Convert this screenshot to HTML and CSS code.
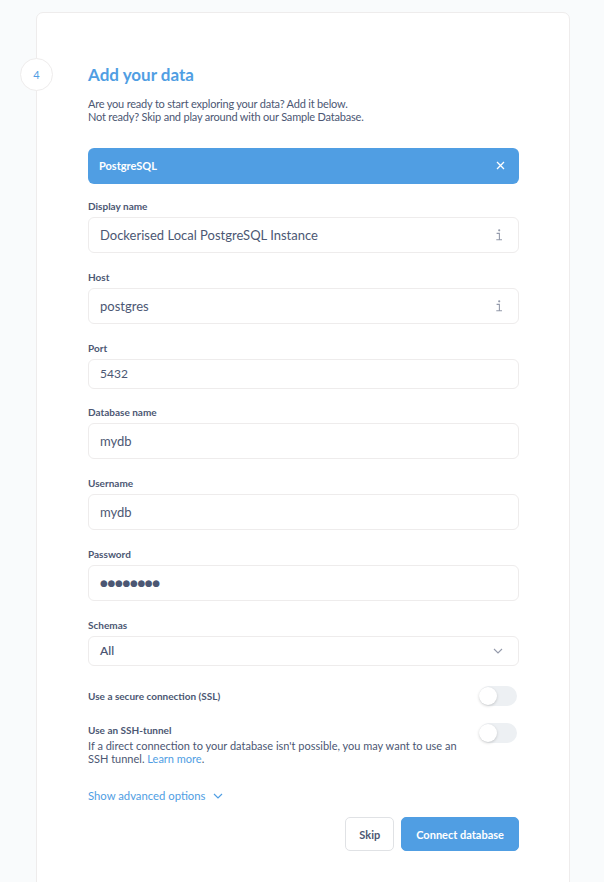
FILE: index.html
```html
<!DOCTYPE html>
<html>
<head>
<meta charset="utf-8">
<link rel="stylesheet" href="styles.css">
</head>
<body>
<div class="card">
  <div class="step">4</div>
  <h2 class="title">Add your data</h2>
  <p class="desc">Are you ready to start exploring your data? Add it below.<br>Not ready? Skip and play around with our Sample Database.</p>

  <div class="engine">
    <span>PostgreSQL</span>
    <svg class="close" width="9" height="9" viewBox="0 0 9 9"><path d="M1 1L8 8M8 1L1 8" stroke="#fff" stroke-width="1.3" fill="none"/></svg>
  </div>

  <div class="field">
    <div class="label">Display name</div>
    <div class="input big"><span>Dockerised Local PostgreSQL Instance</span>
      <svg class="info" width="8" height="12" viewBox="0 0 8 12"><circle cx="4.2" cy="1.3" r="1.1" fill="#949aab"/><path d="M1.6 4.4H4.4V10.6M1.3 10.8H7" stroke="#949aab" stroke-width="1.1" fill="none"/></svg>
    </div>
  </div>

  <div class="field">
    <div class="label">Host</div>
    <div class="input big"><span>postgres</span>
      <svg class="info" width="8" height="12" viewBox="0 0 8 12"><circle cx="4.2" cy="1.3" r="1.1" fill="#949aab"/><path d="M1.6 4.4H4.4V10.6M1.3 10.8H7" stroke="#949aab" stroke-width="1.1" fill="none"/></svg>
    </div>
  </div>

  <div class="field field-small">
    <div class="label">Port</div>
    <div class="input small"><span>5432</span></div>
  </div>

  <div class="field">
    <div class="label">Database name</div>
    <div class="input big"><span>mydb</span></div>
  </div>

  <div class="field">
    <div class="label">Username</div>
    <div class="input big"><span>mydb</span></div>
  </div>

  <div class="field">
    <div class="label">Password</div>
    <div class="input big"><span class="dots">●●●●●●●●</span></div>
  </div>

  <div class="field">
    <div class="label">Schemas</div>
    <div class="input small select"><span>All</span>
      <svg class="chev" width="10" height="6" viewBox="0 0 10 6"><path d="M1 1L5 5L9 1" stroke="#949aab" stroke-width="1.1" fill="none"/></svg>
    </div>
  </div>

  <div class="toggle-row ssl">
    <div class="label">Use a secure connection (SSL)</div>
    <div class="toggle"><div class="knob"></div></div>
  </div>

  <div class="toggle-row ssh">
    <div class="toggle-text">
      <div class="label">Use an SSH-tunnel</div>
      <p class="help">If a direct connection to your database isn't possible, you may want to use an SSH tunnel. <a class="link">Learn more</a>.</p>
    </div>
    <div class="toggle"><div class="knob"></div></div>
  </div>

  <div class="advanced">
    <span>Show advanced options</span>
    <svg width="10" height="6" viewBox="0 0 10 6"><path d="M1 1L5 5L9 1" stroke="#509ee3" stroke-width="1.2" fill="none"/></svg>
  </div>

  <div class="actions">
    <button class="btn skip">Skip</button>
    <button class="btn primary">Connect database</button>
  </div>
</div>
</body>
</html>
```

FILE: styles.css
```css
* { box-sizing: border-box; }
html, body { margin: 0; padding: 0; }
body {
  background: #f9fbfc;
  font-family: Lato, "Noto Sans", sans-serif;
  color: #4c5773;
  padding-top: 12px;
}
.card {
  position: relative;
  margin-left: 36px;
  width: 534px;
  background: #fff;
  border: 1px solid #eeecec;
  border-radius: 7px;
  padding: 51px 50px 60px 51px;
}
.step {
  position: absolute;
  left: -17px;
  top: 45px;
  width: 33px;
  height: 33px;
  border-radius: 50%;
  border: 1px solid #eeecec;
  background: #fff;
  color: #509ee3;
  font-size: 11px;
  display: flex;
  align-items: center;
  justify-content: center;
}
.title {
  margin: 0;
  font-size: 17px;
  line-height: 22px;
  font-weight: 700;
  color: #509ee3;
}
.desc {
  margin: 11px 0 0;
  font-size: 11px;
  letter-spacing: -0.2px;
  line-height: 13.4px;
}
.engine {
  margin-top: 24px;
  height: 36px;
  background: #509ee3;
  border-radius: 6px;
  display: flex;
  align-items: center;
  justify-content: space-between;
  padding: 0 14px 0 11px;
  color: #fff;
  font-weight: 700;
  font-size: 11px;
  margin-bottom: 14px;
}
.field { margin-bottom: 16px; }
.field-small { margin-bottom: 15px; }
.label {
  font-size: 10px;
  font-weight: 700;
  line-height: 16px;
  margin-bottom: 3px;
  color: #4c5773;
}
.input {
  border: 1px solid #eeecec;
  border-radius: 6px;
  display: flex;
  align-items: center;
  justify-content: space-between;
  padding: 0 13px 0 11px;
  color: #4c5773;
}
.input.big { height: 36px; font-size: 13px; }
.input.small { height: 30px; font-size: 12px; }
.select { font-weight: 600; font-size: 12.5px; }
.dots { font-family: "DejaVu Sans", sans-serif; font-size: 8.8px; letter-spacing: -0.2px; }
.info { margin-right: 2px; }
.chev { margin-right: 2px; }
.toggle-row {
  display: flex;
  justify-content: space-between;
  align-items: flex-start;
}
.toggle-row .label { margin: 0; }
.ssl { margin-top: 20px; align-items: center; }
.ssh { margin-top: 16px; }
.ssh .toggle { margin-top: 1px; }
.toggle-text { width: 376px; }
.help {
  margin: 1px 0 0;
  font-size: 11px;
  line-height: 13.2px;
}
.link { color: #509ee3; }
.toggle {
  width: 38px;
  height: 20px;
  border-radius: 10px;
  background: #edf0f3;
  position: relative;
  margin-right: 2px;
}
.knob {
  position: absolute;
  left: 0;
  top: 1px;
  width: 18px;
  height: 18px;
  border-radius: 50%;
  background: #fff;
  box-shadow: 0 1px 3px rgba(0,0,0,0.18);
}
.advanced {
  margin-top: 24px;
  display: flex;
  align-items: center;
  gap: 8px;
  color: #509ee3;
  font-size: 11.3px;
}
.actions {
  margin-top: 15px;
  display: flex;
  justify-content: flex-end;
  gap: 7px;
}
.btn {
  height: 34px;
  border-radius: 5px;
  font-family: Lato, sans-serif;
  font-weight: 700;
  font-size: 11px;
  padding: 0 13px;
  cursor: pointer;
}
.skip { background: #fff; border: 1px solid #e0e2e5; color: #4c5773; }
.primary { background: #509ee3; border: 1px solid #509ee3; color: #fff; padding: 0 14px; }
```
